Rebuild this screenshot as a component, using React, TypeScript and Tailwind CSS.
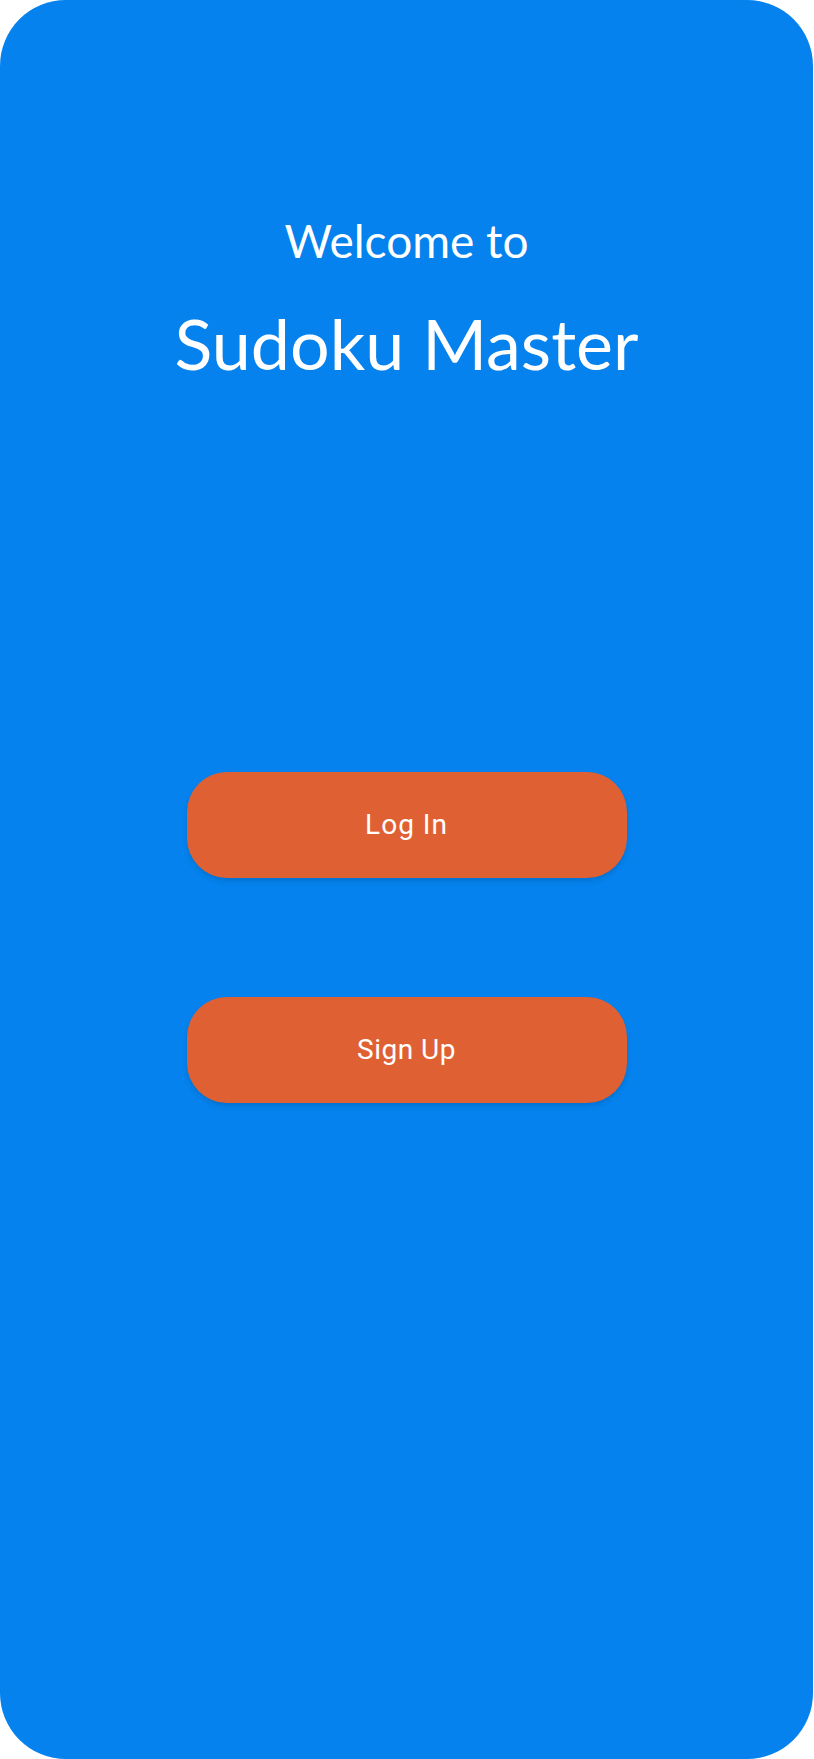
export default function App() {
    return (
        <div className="w-[813px] h-[1759px] bg-[#0582ed] rounded-[66px] flex flex-col items-center pt-[218px] text-white">
            <h1 className="text-[46px] leading-none font-['Lato',sans-serif] font-normal">
                Welcome to
            </h1>
            <h2 className="mt-[44px] text-[70px] leading-none font-['Lato',sans-serif] font-normal">
                Sudoku Master
            </h2>

            <button className="mt-[394px] w-[440px] h-[106px] rounded-[40px] bg-[#df6133] shadow-md text-[28px] tracking-[1px] font-['Roboto',sans-serif]">
                Log In
            </button>
            <button className="mt-[119px] w-[440px] h-[106px] rounded-[40px] bg-[#df6133] shadow-md text-[28px] tracking-[0.5px] font-['Roboto',sans-serif]">
                Sign Up
            </button>
        </div>
    )
}
